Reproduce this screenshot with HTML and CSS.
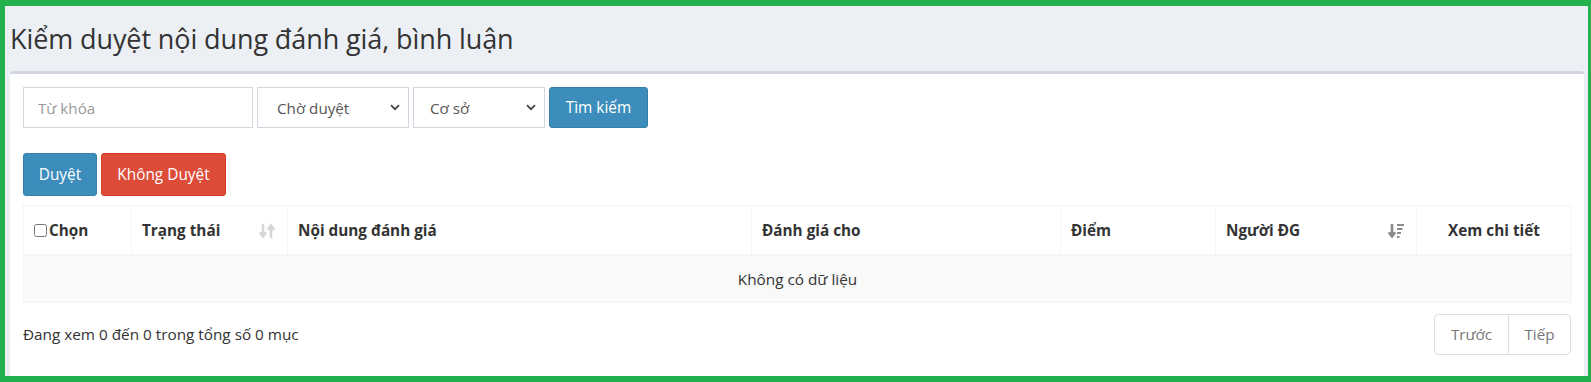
FILE: index.html
```html
<!DOCTYPE html>
<html lang="vi">
<head>
<meta charset="utf-8">
<title>Kiểm duyệt nội dung đánh giá, bình luận</title>
<link rel="stylesheet" href="styles.css">
</head>
<body>
<div class="frame">
  <section class="content-header">
    <h1>Kiểm duyệt nội dung đánh giá, bình luận</h1>
  </section>
  <div class="box">
    <form class="filters">
      <input class="field keyword" type="text" placeholder="Từ khóa">
      <div class="select-wrap w1">
        <select class="field select"><option>Chờ duyệt</option></select>
        <svg class="chev" width="10" height="7" viewBox="0 0 10 7"><path d="M1 1.2 5 5.2 9 1.2" fill="none" stroke="#444" stroke-width="1.7"/></svg>
      </div>
      <div class="select-wrap w2">
        <select class="field select"><option>Cơ sở</option></select>
        <svg class="chev" width="10" height="7" viewBox="0 0 10 7"><path d="M1 1.2 5 5.2 9 1.2" fill="none" stroke="#444" stroke-width="1.7"/></svg>
      </div>
      <button type="button" class="btn btn-primary">Tìm kiếm</button>
    </form>
    <div class="actions">
      <button type="button" class="btn btn-primary b-ok">Duyệt</button>
      <button type="button" class="btn btn-danger b-no">Không Duyệt</button>
    </div>
    <table class="grid">
      <colgroup>
        <col style="width:108px"><col style="width:156px"><col style="width:464px"><col style="width:309px"><col style="width:155px"><col style="width:201px"><col style="width:155px">
      </colgroup>
      <thead>
        <tr>
          <th class="c-check"><input type="checkbox" class="cb">Chọn</th>
          <th class="sortable">Trạng thái
            <svg class="sort" width="18" height="18" viewBox="0 0 18 18"><path d="M5 2v11M1.8 10.2 5 14.4l3.2-4.2" fill="none" stroke="#d6d6d6" stroke-width="2.6"/><path d="M13 16V5M9.8 7.8 13 3.6l3.2 4.2" fill="none" stroke="#d6d6d6" stroke-width="2.6"/></svg>
          </th>
          <th>Nội dung đánh giá</th>
          <th>Đánh giá cho</th>
          <th>Điểm</th>
          <th class="sortable">Người ĐG
            <svg class="sort" width="18" height="18" viewBox="0 0 18 18"><path d="M5 2v11M1.8 10.2 5 14.4l3.2-4.2" fill="none" stroke="#8a8a8a" stroke-width="2.6"/><path d="M10 3h7M10 7h5.5M10 11h4M10 15h2.5" fill="none" stroke="#8a8a8a" stroke-width="2.2"/></svg>
          </th>
          <th class="center">Xem chi tiết</th>
        </tr>
      </thead>
      <tbody>
        <tr class="empty"><td colspan="7">Không có dữ liệu</td></tr>
      </tbody>
    </table>
    <div class="footer">
      <div class="info">Đang xem 0 đến 0 trong tổng số 0 mục</div>
      <ul class="pager">
        <li>Trước</li>
        <li>Tiếp</li>
      </ul>
    </div>
  </div>
</div>
</body>
</html>
```
FILE: styles.css
```css
* { box-sizing: border-box; }
html, body { margin: 0; padding: 0; }
body {
  font-family: "Open Sans", "Noto Sans", sans-serif;
  color: #333;
  background: #22b14c;
}
.frame {
  height: 382px;
  border-style: solid;
  border-color: #22b14c;
  border-width: 6px 3px 6px 5px;
  background: #ecf0f5;
  display: flex;
  flex-direction: column;
  overflow: hidden;
}
.content-header {
  height: 65px;
  padding: 0 5px;
  display: flex;
  align-items: center;
}
.content-header h1 {
  margin: 0;
  font-weight: 400;
  font-size: 27px;
  color: #333;
  letter-spacing: -0.1px;
}
.box {
  flex: 1;
  margin: 0 4px 0 5px;
  background: #fff;
  border-top: 3px solid #d2d6de;
  border-radius: 3px 3px 0 0;
  box-shadow: 0 1px 1px rgba(0,0,0,0.1);
  padding: 13px 13px 0 13px;
}
.filters {
  display: flex;
  gap: 4px;
  height: 41px;
}
.field {
  height: 41px;
  border: 1px solid #d2d6de;
  border-radius: 0;
  font-family: inherit;
  font-size: 15.2px;
  color: #555;
  background: #fff;
  padding: 0 14px;
  outline: none;
}
.keyword { width: 230px; }
.keyword::placeholder { color: #999; }
.select-wrap { position: relative; }
.w1 { width: 152px; }
.w2 { width: 132px; }
.select {
  width: 100%;
  appearance: none;
  -webkit-appearance: none;
  padding-left: 19px;
}
.w2 .select { padding-left: 16px; }
.chev { position: absolute; right: 9px; top: 17px; pointer-events: none; }
.btn {
  height: 41px;
  border: 1px solid transparent;
  border-radius: 3px;
  font-family: inherit;
  font-size: 15.4px;
  color: #fff;
  padding: 0 12px;
  cursor: pointer;
}
.btn-primary { background: #3c8dbc; border-color: #367fa9; }
.btn-danger { background: #dd4b39; border-color: #d73925; }
.filters .btn { width: 99px; padding: 0; }
.actions {
  display: flex;
  gap: 4px;
  margin-top: 25px;
  height: 43px;
}
.actions .btn { height: 43px; padding: 0; }
.b-ok { width: 74px; }
.b-no { width: 125px; }
.grid {
  margin-top: 9px;
  width: 1548px;
  border-collapse: collapse;
  table-layout: fixed;
  font-size: 15.3px;
}
.grid th, .grid td { border: 1px solid #f4f4f4; }
.grid th {
  height: 49px;
  text-align: left;
  font-weight: 700;
  color: #333;
  padding: 0 10px;
  border-bottom-width: 2px;
  position: relative;
}
.grid th.center { text-align: center; }
.grid th.c-check { padding-left: 10px; }
.cb {
  width: 13px; height: 13px;
  margin: 0 2px 0 0;
  vertical-align: -1px;
}
.sort { position: absolute; right: 11px; top: 16px; }
.grid td {
  height: 48px;
  text-align: center;
  background: #f9f9f9;
  color: #333;
}
.footer {
  display: flex;
  justify-content: space-between;
  align-items: center;
  margin-top: 10px;
  height: 42px;
}
.info { font-size: 15.3px; color: #333; }
.pager {
  list-style: none;
  margin: 0;
  padding: 0;
  display: flex;
  height: 41px;
  border: 1px solid #ddd;
  border-radius: 4px;
  font-size: 15.2px;
  color: #777;
}
.pager li {
  display: flex;
  align-items: center;
  justify-content: center;
}
.pager li:first-child { width: 73px; }
.pager li + li { border-left: 1px solid #ddd; width: 62px; }
```
